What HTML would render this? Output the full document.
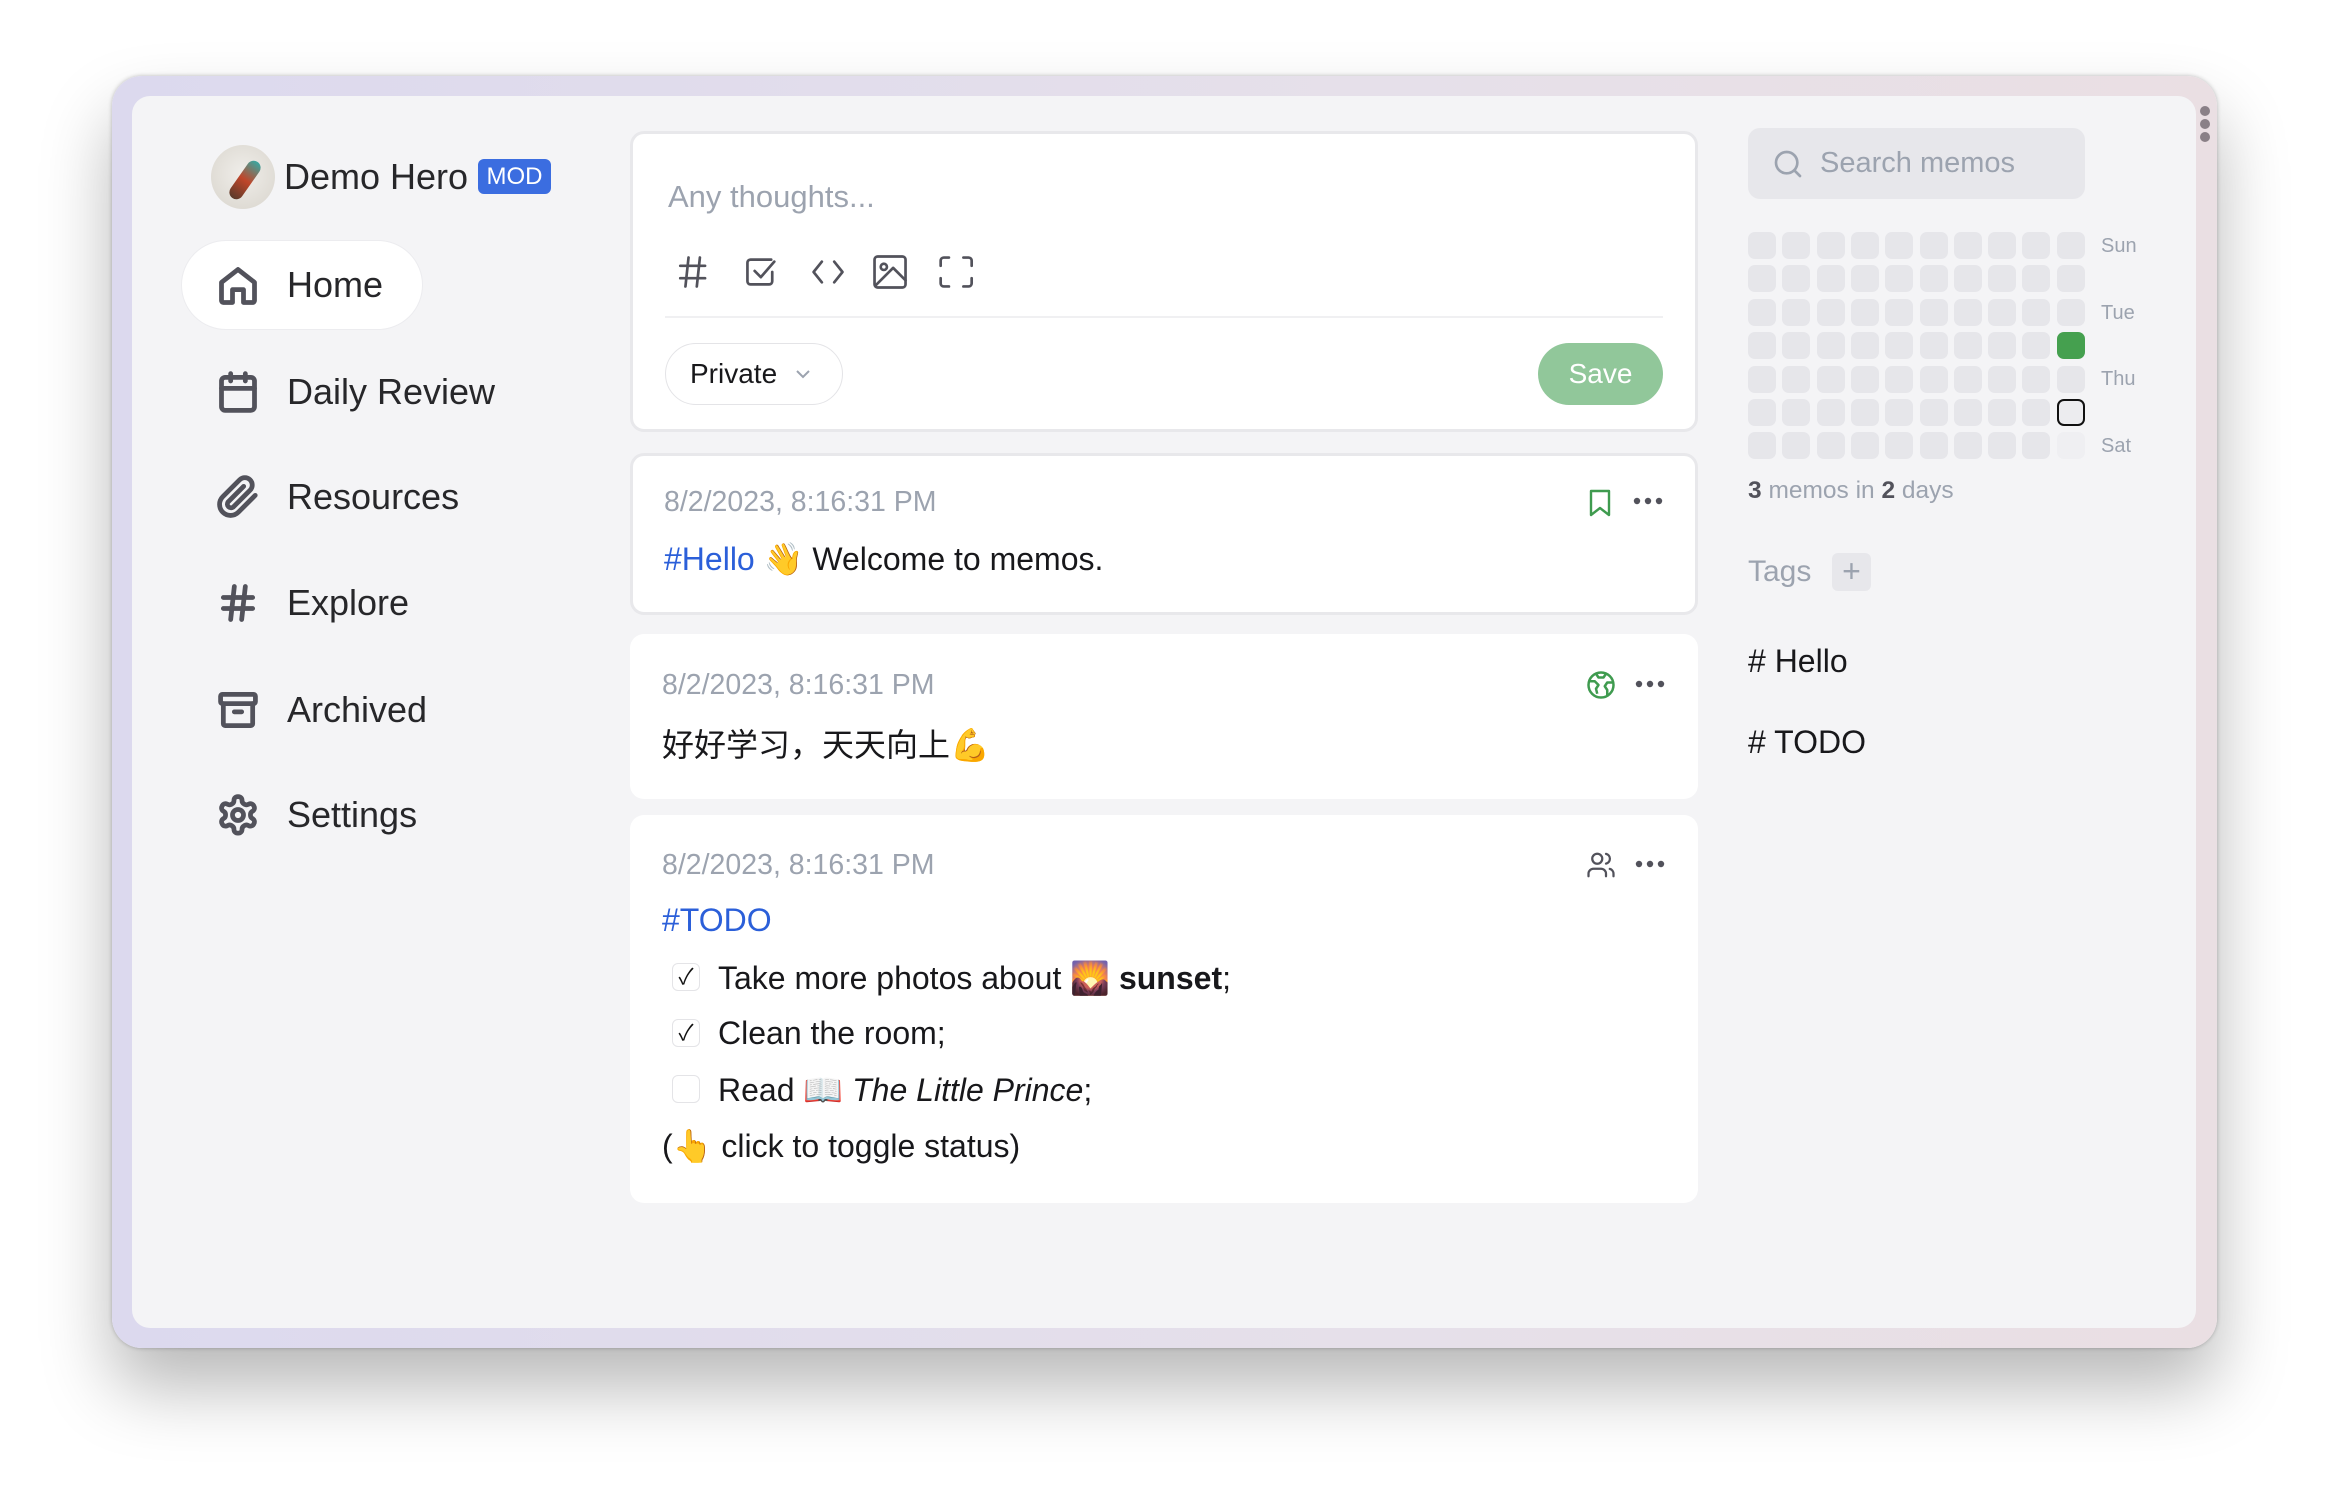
<!DOCTYPE html>
<html><head><meta charset="utf-8"><style>
*{box-sizing:border-box;margin:0;padding:0}
body{width:2328px;height:1496px;background:#fff;position:relative;overflow:hidden;font-family:"Liberation Sans","Noto Sans CJK SC",sans-serif;color:#18181b}
.abs{position:absolute}
.frame{left:112px;top:76px;width:2105px;height:1272px;border-radius:30px;background:linear-gradient(90deg,#dcd9ee,#e6e0ea 60%,#eadfe3);box-shadow:0 40px 70px rgba(0,0,0,.28),0 0 4px rgba(0,0,0,.25)}
.inner{left:132px;top:96px;width:2064px;height:1232px;border-radius:18px;background:#f4f4f6}
.navt{position:absolute;left:287px;font-size:36px;color:#27272a;line-height:40px}
.card{background:#fff;border-radius:14px;left:630px;width:1068px}
.date{font-size:28.5px;color:#9ca3af}
.txt{font-size:32px;color:#18181b}
.cell{position:absolute;width:28px;height:27px;border-radius:7px;background:#e6e6ea}
.day{position:absolute;left:2101px;font-size:20px;color:#9ca3af}
.ico{stroke:#52525b;fill:none;stroke-width:2.6;stroke-linecap:round;stroke-linejoin:round}
.cb{position:absolute;left:672px;width:28px;height:28px;border:1.5px solid #e4e4e7;border-radius:6px;font-size:22px;text-align:center;line-height:26px;color:#111}
</style></head><body>
<div class="abs frame"></div>
<div class="abs inner"></div>
<div class="abs" style="left:2200px;top:106px;width:11px">
<div style="width:10px;height:10px;border-radius:5px;background:#8a8087;margin-bottom:3px"></div>
<div style="width:10px;height:10px;border-radius:5px;background:#8a8087;margin-bottom:3px"></div>
<div style="width:10px;height:10px;border-radius:5px;background:#8a8087"></div></div>

<!-- sidebar -->
<div class="abs" style="left:211px;top:145px;width:64px;height:64px;border-radius:32px;background:radial-gradient(circle at 50% 45%,#f0eeea,#d8d4cc)"></div>
<div class="abs" style="top:158px;width:14px;height:44px;border-radius:8px;background:linear-gradient(#3aa7a0,#c0462a 50%,#5a3a2a);transform:rotate(35deg);left:238px"></div>
<div class="abs" style="left:284px;top:157px;font-size:36px;color:#27272a;line-height:40px">Demo Hero</div>
<div class="abs" style="left:478px;top:159px;width:73px;height:35px;border-radius:6px;background:#3b6de0;color:#fff;font-size:24px;line-height:35px;text-align:center">MOD</div>

<div class="abs" style="left:181px;top:240px;width:242px;height:90px;border-radius:45px;background:#fff;border:1.5px solid #ececef"></div>
<svg class="abs" style="left:216px;top:264px" width="44" height="44" viewBox="0 0 24 24"><path class="ico" d="M3 10l9-7 9 7v10a1 1 0 0 1-1 1h-5v-7h-6v7H4a1 1 0 0 1-1-1z" stroke-width="1.7"/></svg>
<div class="navt" style="top:265px">Home</div>
<svg class="abs" style="left:216px;top:370px" width="44" height="44" viewBox="0 0 24 24"><g class="ico" stroke-width="1.7"><rect x="3" y="4" width="18" height="18" rx="2"/><path d="M16 2v4M8 2v4M3 10h18"/></g></svg>
<div class="navt" style="top:372px">Daily Review</div>
<svg class="abs" style="left:216px;top:475px" width="44" height="44" viewBox="0 0 24 24"><path class="ico" stroke-width="1.7" d="M21.4 11.1l-9.2 9.2a6 6 0 0 1-8.5-8.5l9.2-9.2a4 4 0 0 1 5.7 5.7l-9.2 9.2a2 2 0 0 1-2.8-2.8l8.5-8.5"/></svg>
<div class="navt" style="top:477px">Resources</div>
<svg class="abs" style="left:216px;top:581px" width="44" height="44" viewBox="0 0 24 24"><path class="ico" stroke-width="1.7" d="M4 9h16M4 15h16M10 3L8 21M16 3l-2 18"/></svg>
<div class="navt" style="top:583px">Explore</div>
<svg class="abs" style="left:216px;top:688px" width="44" height="44" viewBox="0 0 24 24"><g class="ico" stroke-width="1.7"><rect x="2.5" y="3.5" width="19" height="5" rx="1"/><path d="M4 8.5v11a1 1 0 0 0 1 1h14a1 1 0 0 0 1-1v-11M10 13h4"/></g></svg>
<div class="navt" style="top:690px">Archived</div>
<svg class="abs" style="left:216px;top:793px" width="44" height="44" viewBox="0 0 24 24"><g class="ico" stroke-width="1.6"><path d="M12.2 2h-.4a2 2 0 0 0-2 2v.2a2 2 0 0 1-1 1.7l-.4.3a2 2 0 0 1-2 0l-.2-.1a2 2 0 0 0-2.7.7l-.2.4a2 2 0 0 0 .7 2.7l.2.1a2 2 0 0 1 1 1.7v.5a2 2 0 0 1-1 1.7l-.2.1a2 2 0 0 0-.7 2.7l.2.4a2 2 0 0 0 2.7.7l.2-.1a2 2 0 0 1 2 0l.4.3a2 2 0 0 1 1 1.7v.2a2 2 0 0 0 2 2h.4a2 2 0 0 0 2-2v-.2a2 2 0 0 1 1-1.7l.4-.3a2 2 0 0 1 2 0l.2.1a2 2 0 0 0 2.7-.7l.2-.4a2 2 0 0 0-.7-2.7l-.2-.1a2 2 0 0 1-1-1.7v-.5a2 2 0 0 1 1-1.7l.2-.1a2 2 0 0 0 .7-2.7l-.2-.4a2 2 0 0 0-2.7-.7l-.2.1a2 2 0 0 1-2 0l-.4-.3a2 2 0 0 1-1-1.7V4a2 2 0 0 0-2-2z"/><circle cx="12" cy="12" r="3"/></g></svg>
<div class="navt" style="top:795px">Settings</div>

<!-- editor -->
<div class="abs card" style="top:131px;height:301px;border:3px solid #e8e8eb"></div>
<div class="abs" style="left:668px;top:179px;font-size:31px;color:#9ca3af">Any thoughts...</div>
<svg class="abs" style="left:672px;top:252px" width="310" height="40" viewBox="0 0 300 36">
<g class="ico"><path d="M8 12h24M8 24h24M16 4l-3 28M27 4l-3 28"/>
<path d="M96 6H76a3 3 0 0 0-3 3v18a3 3 0 0 0 3 3h18a3 3 0 0 0 3-3V18"/><path d="M80 17l6 6 13-15"/>
<path d="M145 8l-8 10 8 10M157 8l8 10-8 10"/>
<rect x="196" y="3" width="30" height="30" rx="3"/><circle cx="205" cy="13" r="3"/><path d="M197 31l17-17 12 12"/>
<path d="M260 12V7a3 3 0 0 1 3-3h5M282 4h5a3 3 0 0 1 3 3v5M290 24v5a3 3 0 0 1-3 3h-5M268 32h-5a3 3 0 0 1-3-3v-5"/></g></svg>
<div class="abs" style="left:665px;top:316px;width:998px;height:1.5px;background:#f0f0f2"></div>
<div class="abs" style="left:665px;top:343px;width:178px;height:62px;border-radius:31px;border:1.5px solid #e4e4e7;font-size:28px;line-height:60px;padding-left:24px;color:#18181b">Private<svg style="position:absolute;left:128px;top:24px" width="18" height="12" viewBox="0 0 18 12"><path d="M3 3l6 6 6-6" fill="none" stroke="#9ca3af" stroke-width="2"/></svg></div>
<div class="abs" style="left:1538px;top:343px;width:125px;height:62px;border-radius:31px;background:#91c79a;color:#fff;font-size:28px;line-height:62px;text-align:center">Save</div>

<!-- card 1 -->
<div class="abs card" style="top:453px;height:162px;border:3px solid #e8e8eb"></div>
<div class="abs date" style="left:664px;top:486px">8/2/2023, 8:16:31 PM</div>
<div class="abs txt" style="left:664px;top:540px"><span style="color:#2b5fd9">#Hello</span> 👋 Welcome to memos.</div>
<svg class="abs" style="left:1587px;top:488px" width="26" height="30" viewBox="0 0 26 30"><path d="M4 3h18v24l-9-7-9 7z" fill="none" stroke="#3f9b4f" stroke-width="2.4" stroke-linejoin="round"/></svg>
<svg class="abs" style="left:1632px;top:496px" width="34" height="10"><circle cx="5" cy="5" r="3.2" fill="#52525b"/><circle cx="16" cy="5" r="3.2" fill="#52525b"/><circle cx="27" cy="5" r="3.2" fill="#52525b"/></svg>

<!-- card 2 -->
<div class="abs card" style="top:634px;height:165px"></div>
<div class="abs date" style="left:662px;top:669px">8/2/2023, 8:16:31 PM</div>
<div class="abs txt" style="left:662px;top:720px">好好学习，天天向上💪</div>
<svg class="abs" style="left:1586px;top:670px" width="30" height="30" viewBox="0 0 24 24"><g fill="none" stroke="#3f9b4f" stroke-width="2" stroke-linejoin="round"><circle cx="12" cy="12" r="10"/><path d="M3 9h4l3 3-2 3 1 4M21 10h-4l-2 3 2 3v5M8 3l2 3h4l2-3"/></g></svg>
<svg class="abs" style="left:1634px;top:679px" width="34" height="10"><circle cx="5" cy="5" r="3.2" fill="#52525b"/><circle cx="16" cy="5" r="3.2" fill="#52525b"/><circle cx="27" cy="5" r="3.2" fill="#52525b"/></svg>

<!-- card 3 -->
<div class="abs card" style="top:815px;height:388px"></div>
<div class="abs date" style="left:662px;top:849px">8/2/2023, 8:16:31 PM</div>
<svg class="abs" style="left:1586px;top:850px" width="30" height="30" viewBox="0 0 24 24"><g fill="none" stroke="#52525b" stroke-width="1.8" stroke-linecap="round"><circle cx="9" cy="7" r="4"/><path d="M2 21v-2a4 4 0 0 1 4-4h6a4 4 0 0 1 4 4v2M16 3.1a4 4 0 0 1 0 7.8M22 21v-2a4 4 0 0 0-3-3.9"/></g></svg>
<svg class="abs" style="left:1634px;top:859px" width="34" height="10"><circle cx="5" cy="5" r="3.2" fill="#52525b"/><circle cx="16" cy="5" r="3.2" fill="#52525b"/><circle cx="27" cy="5" r="3.2" fill="#52525b"/></svg>
<div class="abs txt" style="left:662px;top:902px;color:#2b5fd9">#TODO</div>
<div class="cb" style="top:963px">✓</div>
<div class="abs txt" style="left:718px;top:959px">Take more photos about 🌄 <b>sunset</b>;</div>
<div class="cb" style="top:1019px">✓</div>
<div class="abs txt" style="left:718px;top:1015px">Clean the room;</div>
<div class="cb" style="top:1075px"></div>
<div class="abs txt" style="left:718px;top:1071px">Read 📖 <i>The Little Prince</i>;</div>
<div class="abs txt" style="left:662px;top:1127px">(👆 click to toggle status)</div>

<!-- right -->
<div class="abs" style="left:1748px;top:128px;width:337px;height:71px;border-radius:12px;background:#e7e7eb"></div>
<svg class="abs" style="left:1772px;top:148px" width="32" height="32" viewBox="0 0 24 24"><g fill="none" stroke="#9ca3af" stroke-width="2" stroke-linecap="round"><circle cx="11" cy="11" r="8"/><path d="M21 21l-4.3-4.3"/></g></svg>
<div class="abs" style="left:1820px;top:147px;font-size:29px;color:#9ca3af">Search memos</div>
<div id="grid"></div>
<div class="day" style="top:235px">Sun</div>
<div class="day" style="top:302px">Tue</div>
<div class="day" style="top:368px">Thu</div>
<div class="day" style="top:435px">Sat</div>
<div class="abs" style="left:1748px;top:477px;font-size:24.5px;color:#9ca3af"><b style="color:#52525b">3</b> memos in <b style="color:#52525b">2</b> days</div>
<div class="abs" style="left:1748px;top:555px;font-size:30px;color:#9ca3af">Tags</div>
<div class="abs" style="left:1832px;top:553px;width:39px;height:38px;border-radius:6px;background:#e7e7eb;color:#9ca3af;font-size:32px;line-height:36px;text-align:center">+</div>
<div class="abs" style="left:1748px;top:643px;font-size:32px;color:#18181b"># Hello</div>
<div class="abs" style="left:1748px;top:724px;font-size:32px;color:#18181b"># TODO</div>
<script>
var g=document.getElementById('grid'),h='';
for(var c=0;c<10;c++)for(var r=0;r<7;r++){
var x=1748+c*34.3,y=232+r*33.4,st='';
if(c==9&&r==3)st='background:#45a04f;';
if(c==9&&r==5)st='background:#ececef;border:2.5px solid #111;';
if(c==9&&r==6)st='background:#efeff2;';
h+='<div class="cell" style="left:'+x+'px;top:'+y+'px;'+st+'"></div>';}
g.innerHTML=h;
</script>
</body></html>
